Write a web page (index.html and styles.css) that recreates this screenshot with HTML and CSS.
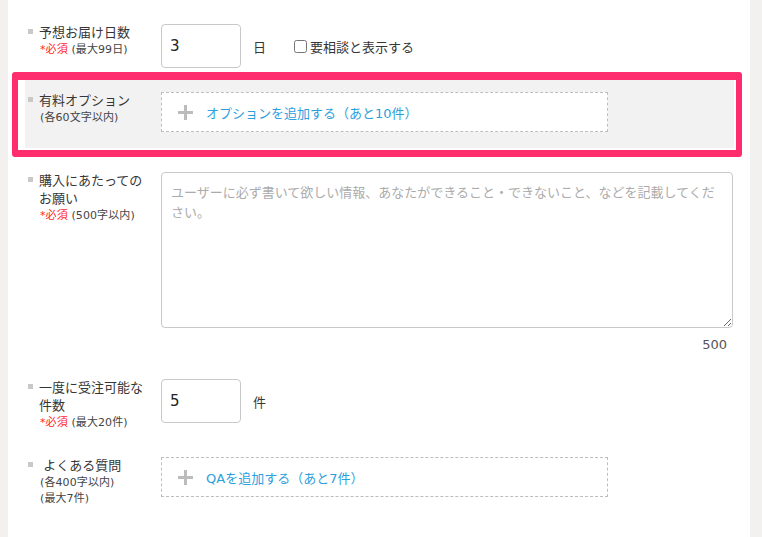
FILE: index.html
```html
<!DOCTYPE html>
<html lang="ja">
<head>
<meta charset="utf-8">
<title>フォーム</title>
<link rel="stylesheet" href="styles.css">
</head>
<body>
<div class="page">
  <div class="form">
    <div class="row row-days">
      <div class="label">
        <span class="bullet"></span>
        <div class="label-text">
          <p class="label-title">予想お届け日数</p>
          <p class="label-sub"><span class="req">*必須</span> (最大99日)</p>
        </div>
      </div>
      <div class="field field-inline">
        <input class="num" type="text" value="3">
        <span class="unit">日</span>
        <label class="consult"><input type="checkbox">要相談と表示する</label>
      </div>
    </div>

    <div class="highlight">
      <div class="row row-gray">
        <div class="label">
          <span class="bullet"></span>
          <div class="label-text">
            <p class="label-title">有料オプション</p>
            <p class="label-sub">(各60文字以内)</p>
          </div>
        </div>
        <div class="field">
          <div class="add-box">
            <span class="plus"></span>
            <span class="add-text">オプションを追加する（あと10件）</span>
          </div>
        </div>
      </div>
    </div>

    <div class="row row-request">
      <div class="label">
        <span class="bullet"></span>
        <div class="label-text">
          <p class="label-title">購入にあたってのお願い</p>
          <p class="label-sub"><span class="req">*必須</span> (500字以内)</p>
        </div>
      </div>
      <div class="field field-wide">
        <textarea class="request" placeholder="ユーザーに必ず書いて欲しい情報、あなたができること・できないこと、などを記載してください。"></textarea>
        <div class="counter">500</div>
      </div>
    </div>

    <div class="row row-count">
      <div class="label">
        <span class="bullet"></span>
        <div class="label-text">
          <p class="label-title">一度に受注可能な件数</p>
          <p class="label-sub"><span class="req">*必須</span> (最大20件)</p>
        </div>
      </div>
      <div class="field field-inline">
        <input class="num" type="text" value="5">
        <span class="unit">件</span>
      </div>
    </div>

    <div class="row row-qa">
      <div class="label">
        <span class="bullet"></span>
        <div class="label-text">
          <p class="label-title">&nbsp;よくある質問</p>
          <p class="label-sub">(各400字以内)</p>
          <p class="label-sub">(最大7件)</p>
        </div>
      </div>
      <div class="field">
        <div class="add-box">
          <span class="plus"></span>
          <span class="add-text">QAを追加する（あと7件）</span>
        </div>
      </div>
    </div>
  </div>
</div>
</body>
</html>
```

FILE: styles.css
```css
* { box-sizing: border-box; }

html, body {
  margin: 0;
  padding: 0;
  background: #f2f1f0;
}

body {
  font-family: "DejaVu Sans", "Noto Sans CJK JP", sans-serif;
  color: #363636;
  font-size: 13px;
}

.page {
  margin-left: 8px;
  width: 742px;
  min-height: 537px;
  background: #fff;
  padding-top: 24px;
}

.row {
  display: flex;
  align-items: flex-start;
  padding-left: 20px;
}

.label {
  width: 133px;
  flex: none;
  display: flex;
  align-items: flex-start;
}

.bullet {
  width: 5px;
  height: 5px;
  background: #cbc9c8;
  margin: 5px 6px 0 0;
  flex: none;
}

.label-text {
  width: 110px;
}

.label-title {
  margin: 0;
  font-size: 13px;
  line-height: 18px;
  color: #363636;
}

.label-sub {
  margin: 0;
  font-size: 11px;
  line-height: 16px;
  color: #444;
  padding-left: 1px;
  letter-spacing: 0.1px;
}

.req {
  color: #ff1f1f;
}

.field-inline {
  display: flex;
  align-items: center;
  height: 44px;
}

.num {
  width: 80px;
  height: 44px;
  border: 1px solid #c9c9c9;
  border-radius: 4px;
  padding: 0 8px;
  font-family: "DejaVu Sans", sans-serif;
  font-size: 15px;
  color: #222;
  background: #fff;
  outline: none;
}

.unit {
  margin-left: 12px;
  font-size: 13px;
  color: #363636;
}

.consult {
  margin-left: 24px;
  display: flex;
  align-items: center;
  font-size: 13px;
  color: #363636;
}

.consult input {
  margin: 0 3px 0 4px;
  width: 13px;
  height: 13px;
}

.highlight {
  margin: 4px 0 0 4px;
  width: 730px;
  border-style: solid;
  border-color: #fe2d6d;
  border-width: 8px 6px 7px 6px;
  border-radius: 3px;
  padding: 0 2px 2px 7px;
  background: #fff;
}

.row-gray {
  background: #f2f2f2;
  padding: 12px 0 16px 3px;
}

.add-box {
  width: 447px;
  height: 40px;
  border: 1px dashed #bdbdbd;
  background: #fff;
  display: flex;
  align-items: center;
  padding-left: 16px;
}

.plus {
  position: relative;
  width: 15px;
  height: 15px;
  flex: none;
}

.plus::before,
.plus::after {
  content: "";
  position: absolute;
  background: #bcbcbc;
}

.plus::before {
  left: 0;
  top: 6px;
  width: 15px;
  height: 3px;
}

.plus::after {
  left: 6px;
  top: 0;
  width: 3px;
  height: 15px;
}

.add-text {
  margin-left: 13px;
  color: #2d9fdc;
  font-size: 13px;
}

.row-request {
  margin-top: 15px;
}

.field-wide {
  width: 572px;
}

.request {
  display: block;
  width: 572px;
  height: 156px;
  border: 1px solid #c9c9c9;
  border-radius: 4px;
  padding: 10px 16px 10px 9px;
  font-family: "DejaVu Sans", "Noto Sans CJK JP", sans-serif;
  font-size: 13px;
  line-height: 20px;
  color: #333;
  outline: none;
}

.request::placeholder {
  color: #ababab;
}

.counter {
  margin-top: 8px;
  text-align: right;
  padding-right: 6px;
  font-size: 13px;
  line-height: 18px;
  color: #555;
}

.row-count {
  margin-top: 25px;
}

.row-qa {
  margin-top: 26px;
}
```
